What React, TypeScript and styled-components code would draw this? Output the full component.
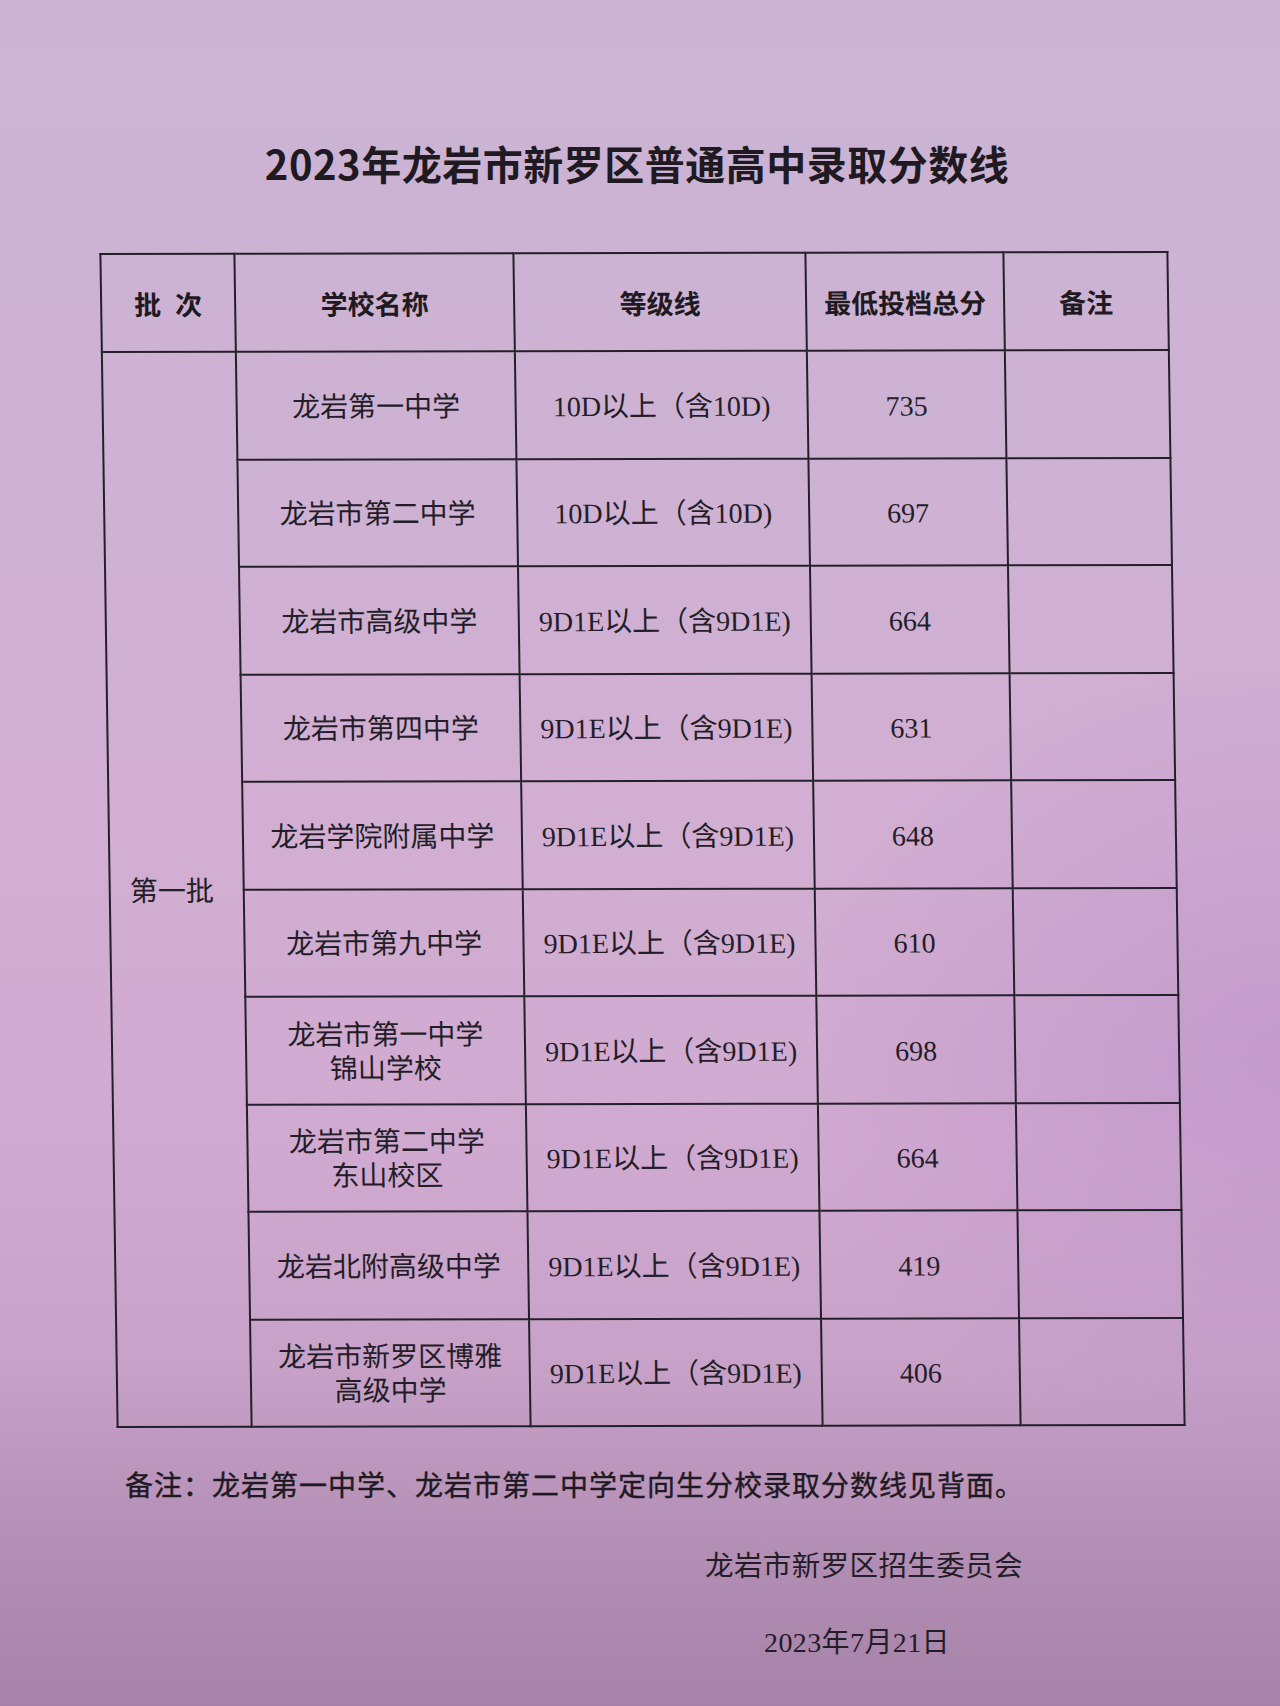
import React from 'react';
import styled, { createGlobalStyle } from 'styled-components';

type SchoolRow = {
  name: string[];
  grade: string;
  score: string;
};

const rows: SchoolRow[] = [
  { name: ['龙岩第一中学'], grade: '10D以上（含10D)', score: '735' },
  { name: ['龙岩市第二中学'], grade: '10D以上（含10D)', score: '697' },
  { name: ['龙岩市高级中学'], grade: '9D1E以上（含9D1E)', score: '664' },
  { name: ['龙岩市第四中学'], grade: '9D1E以上（含9D1E)', score: '631' },
  { name: ['龙岩学院附属中学'], grade: '9D1E以上（含9D1E)', score: '648' },
  { name: ['龙岩市第九中学'], grade: '9D1E以上（含9D1E)', score: '610' },
  { name: ['龙岩市第一中学', '锦山学校'], grade: '9D1E以上（含9D1E)', score: '698' },
  { name: ['龙岩市第二中学', '东山校区'], grade: '9D1E以上（含9D1E)', score: '664' },
  { name: ['龙岩北附高级中学'], grade: '9D1E以上（含9D1E)', score: '419' },
  { name: ['龙岩市新罗区博雅', '高级中学'], grade: '9D1E以上（含9D1E)', score: '406' },
];

const columns = [134, 279, 292, 198, 164];

function App() {
  return (
    <>
      <GlobalStyle />
      <StyledPage>
        <StyledTitle>2023年龙岩市新罗区普通高中录取分数线</StyledTitle>
        <StyledTable>
          <colgroup>
            {columns.map((w, i) => (
              <StyledCol key={i} $w={w} />
            ))}
          </colgroup>
          <thead>
            <tr>
              <StyledHeadCell $spread>批次</StyledHeadCell>
              <StyledHeadCell>学校名称</StyledHeadCell>
              <StyledHeadCell>等级线</StyledHeadCell>
              <StyledHeadCell>最低投档总分</StyledHeadCell>
              <StyledHeadCell>备注</StyledHeadCell>
            </tr>
          </thead>
          <tbody>
            {rows.map((row, i) => (
              <tr key={i}>
                {i === 0 && <StyledBatchCell rowSpan={rows.length}>第一批</StyledBatchCell>}
                <StyledCell>
                  {row.name.map((line) => (
                    <StyledLine key={line}>{line}</StyledLine>
                  ))}
                </StyledCell>
                <StyledCell>{row.grade}</StyledCell>
                <StyledCell>{row.score}</StyledCell>
                <StyledCell />
              </tr>
            ))}
          </tbody>
        </StyledTable>
        <StyledNote>备注：龙岩第一中学、龙岩市第二中学定向生分校录取分数线见背面。</StyledNote>
        <StyledSign>
          <StyledSignLine>龙岩市新罗区招生委员会</StyledSignLine>
          <StyledDate>2023年7月21日</StyledDate>
        </StyledSign>
      </StyledPage>
    </>
  );
}

const GlobalStyle = createGlobalStyle`
  html, body {
    margin: 0;
    padding: 0;
  }
  body {
    font-family: "Liberation Serif", "Noto Sans CJK SC", serif;
    color: #231d27;
  }
`;

const StyledPage = styled.div`
  width: 1280px;
  height: 1706px;
  overflow: hidden;
  box-sizing: border-box;
  padding-top: 138px;
  background:
    radial-gradient(ellipse 55% 35% at 100% 62%, rgba(175, 130, 195, 0.4), rgba(175, 130, 195, 0) 70%),
    linear-gradient(180deg, #cbb4d3 0%, #ceb1d3 30%, #d2aed2 50%, #d0a9d0 68%, #c7a1c8 80%, #b590b6 90%, #a682a8 100%);
`;

const StyledTitle = styled.h1`
  margin: 0 0 0 -6px;
  text-align: center;
  font-family: "Noto Sans CJK SC", sans-serif;
  font-size: 40px;
  font-weight: 700;
  letter-spacing: 0.5px;
  line-height: 50px;
  color: #1f1a22;
`;

const StyledTable = styled.table`
  margin: 64px 0 0 108px;
  width: 1067px;
  border-collapse: collapse;
  table-layout: fixed;
  transform: skewX(0.72deg) rotate(-0.12deg);
  border: 2.5px solid #24202a;
`;

const StyledCol = styled.col<{ $w: number }>`
  width: ${({ $w }) => $w}px;
`;

const StyledHeadCell = styled.th<{ $spread?: boolean }>`
  height: 96px;
  padding: 0 0 0 ${({ $spread }) => ($spread ? '14px' : '0')};
  border: 2px solid #24202a;
  text-align: center;
  font-family: "Noto Sans CJK SC", sans-serif;
  font-size: 27px;
  font-weight: 700;
  letter-spacing: ${({ $spread }) => ($spread ? '14px' : '0')};
  color: #1f1a22;
`;

const StyledCell = styled.td`
  height: 107.5px;
  padding: 4px 0 0;
  box-sizing: border-box;
  border: 2px solid #24202a;
  text-align: center;
  vertical-align: middle;
  font-size: 28px;
  line-height: 34px;
  white-space: nowrap;
`;

const StyledBatchCell = styled(StyledCell)`
  padding-right: 10px;
`;

const StyledLine = styled.div`
  display: block;
`;

const StyledNote = styled.p`
  margin: 42px 0 0 125px;
  font-size: 28px;
  letter-spacing: 1px;
  line-height: 36px;
  color: #1f1a22;
  -webkit-text-stroke: 0.4px #1f1a22;
`;

const StyledSign = styled.div`
  display: flex;
  flex-direction: column;
  align-items: flex-start;
  margin-left: 705px;
`;

const StyledSignLine = styled.div`
  margin-top: 44px;
  font-size: 28.5px;
  line-height: 36px;
  letter-spacing: 0.4px;
`;

const StyledDate = styled.div`
  margin: 40px 0 0 59px;
  font-size: 28px;
  line-height: 36px;
  letter-spacing: 0.4px;
`;

export default App;
